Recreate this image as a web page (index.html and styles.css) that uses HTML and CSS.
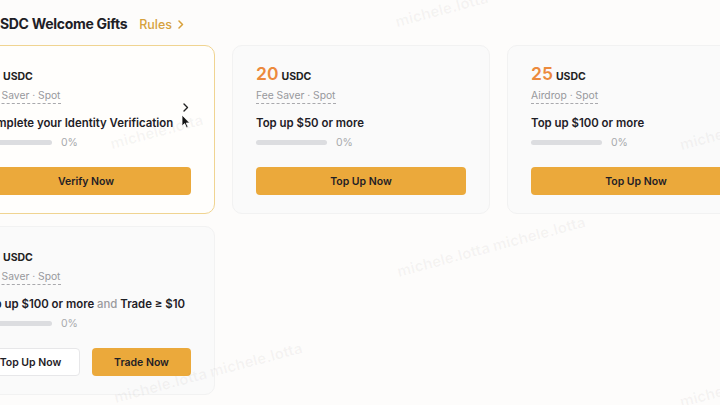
FILE: index.html
```html
<!DOCTYPE html>
<html>
<head>
<meta charset="utf-8">
<link rel="stylesheet" href="styles.css">
</head>
<body>
<div class="page">
  <div class="header">
    <h1 class="title">USDC Welcome Gifts</h1>
    <a class="rules">Rules
      <svg class="rules-chev" width="6" height="9" viewBox="0 0 6 9"><path d="M1 1l3.5 3.5L1 8" fill="none" stroke="#d8a03a" stroke-width="1.5" stroke-linecap="round" stroke-linejoin="round"/></svg>
    </a>
  </div>
  <div class="grid">
    <div class="card active">
      <div class="amount"><span class="num">10</span><span class="cur">USDC</span></div>
      <div class="label"><span>Fee Saver · Spot</span></div>
      <div class="task">Complete your Identity Verification</div>
      <div class="progress"><span class="bar"></span><span class="pct">0%</span></div>
      <div class="actions"><button class="btn primary">Verify Now</button></div>
      <svg class="card-chev" width="6" height="9" viewBox="0 0 6 9"><path d="M1 1l3.5 3.5L1 8" fill="none" stroke="#222" stroke-width="1.4" stroke-linecap="round" stroke-linejoin="round"/></svg>
      <svg class="cursor" width="10" height="15" viewBox="0 0 10 15"><path d="M1 1v11l2.6-2.4 1.9 4.2 1.6-.7-1.9-4.1H8.7z" fill="#111" stroke="#fff" stroke-width="0.8" stroke-linejoin="round"/></svg>
    </div>
    <div class="card">
      <div class="amount"><span class="num">20</span><span class="cur">USDC</span></div>
      <div class="label"><span>Fee Saver · Spot</span></div>
      <div class="task">Top up $50 or more</div>
      <div class="progress"><span class="bar"></span><span class="pct">0%</span></div>
      <div class="actions"><button class="btn primary">Top Up Now</button></div>
    </div>
    <div class="card">
      <div class="amount"><span class="num">25</span><span class="cur">USDC</span></div>
      <div class="label"><span>Airdrop · Spot</span></div>
      <div class="task">Top up $100 or more</div>
      <div class="progress"><span class="bar"></span><span class="pct">0%</span></div>
      <div class="actions"><button class="btn primary">Top Up Now</button></div>
    </div>
    <div class="card">
      <div class="amount"><span class="num">10</span><span class="cur">USDC</span></div>
      <div class="label"><span>Fee Saver · Spot</span></div>
      <div class="task">Top up $100 or more <span class="muted">and</span> Trade ≥ $10</div>
      <div class="progress"><span class="bar"></span><span class="pct">0%</span></div>
      <div class="actions two"><button class="btn outline">Top Up Now</button><button class="btn primary">Trade Now</button></div>
    </div>
  </div>
  <div class="watermarks">
    <span class="wm w1">michele.lotta</span>
    <span class="wm w2">michele.lotta</span>
    <span class="wm w3">michele.lotta michele.lotta</span>
    <span class="wm w5">michele.lotta michele.lotta</span>
    <span class="wm w6">michele</span>
    <span class="wm w7">michele</span>
  </div>
</div>
</body>
</html>
```
FILE: styles.css
```css
* { box-sizing: border-box; }
html, body { margin: 0; padding: 0; }
body {
  width: 720px;
  height: 405px;
  overflow: hidden;
  background: #fdfcfb;
  font-family: Inter, "Noto Sans", sans-serif;
  color: #1e2026;
}
.page {
  position: relative;
  margin-left: -43px;
  width: 820px;
  height: 405px;
}
.header {
  display: flex;
  align-items: center;
  gap: 12px;
  padding: 14px 0 0 33px;
  height: 34px;
}
.title {
  margin: 0;
  font-size: 14px;
  line-height: 20px;
  font-weight: 700;
  letter-spacing: -0.3px;
  color: #1e2026;
}
.rules {
  display: flex;
  align-items: center;
  gap: 6px;
  font-size: 12.5px;
  font-weight: 500;
  color: #d6a23e;
}
.grid {
  display: grid;
  grid-template-columns: repeat(3, 258px);
  column-gap: 17px;
  row-gap: 12px;
  margin-top: 11px;
}
.card {
  position: relative;
  background: #fafafa;
  border: 1px solid #f2f2f2;
  border-radius: 10px;
  padding: 17px 23px 18px;
}
.card.active {
  background: #fffefc;
  border-color: #f0d491;
}
.amount {
  display: flex;
  align-items: baseline;
  height: 22px;
  line-height: 22px;
}
.num {
  font-size: 17.5px;
  font-weight: 600;
  color: #ec8a3d;
}
.cur {
  font-size: 10.5px;
  font-weight: 700;
  color: #222;
  margin-left: 3px;
}
.label {
  margin-top: 3px;
  height: 16px;
  font-size: 10.3px;
  line-height: 15px;
  color: #97989c;
}
.label span {
  display: inline-block;
  border-bottom: 1px dashed #a9a9ad;
}
.task {
  margin-top: 10px;
  font-size: 11.4px;
  line-height: 18px;
  font-weight: 600;
  color: #1e2026;
  white-space: nowrap;
}
.muted { color: #9a9a9e; font-weight: 500; }
.progress {
  display: flex;
  align-items: center;
  margin-top: 3px;
  height: 15px;
}
.bar {
  width: 71px;
  height: 5px;
  border-radius: 3px;
  background: #dcdde0;
}
.pct {
  margin-left: 9px;
  font-size: 10.5px;
  color: #a9aaad;
}
.actions {
  display: flex;
  gap: 12px;
  margin-top: 17px;
}
.btn {
  flex: 1;
  height: 28px;
  border-radius: 4px;
  font-family: Inter, "Noto Sans", sans-serif;
  font-size: 10.5px;
  font-weight: 600;
  color: #1e2026;
  border: 1px solid transparent;
  padding: 0;
}
.btn.primary {
  background: #eba93b;
}
.btn.outline {
  background: #ffffff;
  border-color: #e7e7e9;
}
.card-chev {
  position: absolute;
  left: 225px;
  top: 57px;
}
.cursor {
  position: absolute;
  left: 223px;
  top: 68px;
}
.watermarks {
  position: absolute;
  inset: 0;
  pointer-events: none;
}
.wm {
  position: absolute;
  font-size: 15px;
  font-weight: 700;
  color: rgba(110, 100, 100, 0.06);
  transform: rotate(-15deg);
  white-space: nowrap;
}
.w1 { left: 437px; top: 0px; }
.w2 { left: 152px; top: 122px; }
.w3 { left: 437px; top: 237px; }
.w5 { left: 154px; top: 363px; }
.w6 { left: 722px; top: 128px; }
.w7 { left: 722px; top: 385px; }
```
